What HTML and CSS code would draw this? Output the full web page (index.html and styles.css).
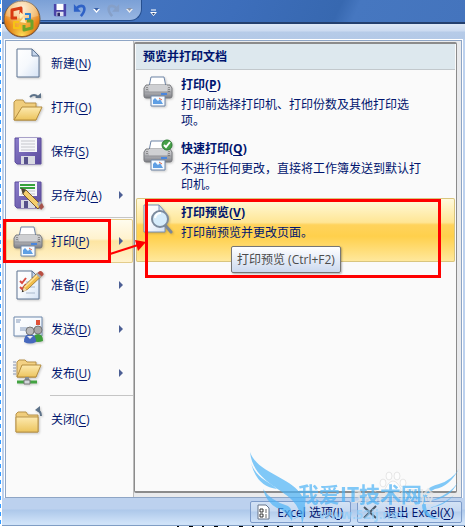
FILE: index.html
```html
<!DOCTYPE html>
<html lang="zh-CN">
<head>
  <meta charset="UTF-8">
  <meta name="viewport" content="width=device-width, initial-scale=1.0">
  <title>Excel - 打印预览</title>
  <link rel="stylesheet" href="styles.css">
</head>
<body>
<!-- Shared icon parts -->
<svg class="defs" aria-hidden="true">
  <defs>
    <linearGradient id="paper" x1="0" y1="0" x2="1" y2="1">
      <stop offset="0" stop-color="#fff"/><stop offset=".5" stop-color="#f6f9fd"/><stop offset="1" stop-color="#d5e2f4"/>
    </linearGradient>
    <linearGradient id="folder" x1="0" y1="0" x2="0" y2="1">
      <stop offset="0" stop-color="#fdeab0"/><stop offset="1" stop-color="#ecc45d"/>
    </linearGradient>
    <linearGradient id="metal" x1="0" y1="0" x2="0" y2="1">
      <stop offset="0" stop-color="#d6d6d8"/><stop offset=".5" stop-color="#b4b5b9"/><stop offset="1" stop-color="#7c7d83"/>
    </linearGradient>
    <linearGradient id="disk" x1="0" y1="0" x2="1" y2="1">
      <stop offset="0" stop-color="#8c7ecb"/><stop offset="1" stop-color="#5a4a9c"/>
    </linearGradient>
    <radialGradient id="orb" cx=".5" cy=".2" r=".85">
      <stop offset="0" stop-color="#fdebd0"/><stop offset=".4" stop-color="#f3b865"/><stop offset=".65" stop-color="#e8861a"/><stop offset="1" stop-color="#b4500a"/>
    </radialGradient>
    <radialGradient id="orbGlow" cx=".5" cy="1" r=".6">
      <stop offset="0" stop-color="#ffe45c"/><stop offset="1" stop-color="#ffb020" stop-opacity="0"/>
    </radialGradient>
    <symbol id="printer" viewBox="0 0 32 32">
      <path d="M9 2h13l2 10H7z" fill="#fff" stroke="#6f86a8"/>
      <path d="M4 10h24l2 3v8q0 2-2 2H4q-2 0-2-2v-8z" fill="url(#metal)" stroke="#77787d"/>
      <path d="M7 10h18v7H7z" fill="#cfd0d3"/>
      <path d="M2 17h28" stroke="#8f9095"/>
      <path d="M19 19h6" stroke="#4a86dd" stroke-width="2"/>
      <path d="M27 12v6M5 12v4" stroke="#555" stroke-dasharray="1 1"/>
      <path d="M9 21h14v10H9z" fill="#f5faff" stroke="#6f86a8"/>
      <path d="M11 29v-4l2-2 3 3 2-2 3 5z" fill="#5f9fe4"/>
      <path d="M17 23l3 2" stroke="#e46a4a"/>
    </symbol>
    <symbol id="floppy" viewBox="0 0 32 32">
      <path d="M3 3h26v26H5l-2-2z" fill="url(#disk)" stroke="#5e4f9f"/>
      <path d="M7 3h18v14H7z" fill="#f6f6fa"/>
      <path d="M9 6h14M9 9h14M9 12h14M9 15h14" stroke="#c5c6cc"/>
      <path d="M9 21h14v8H9z" fill="#d9dae2"/>
      <path d="M12 22h4v7h-4z" fill="#56518a"/>
    </symbol>
    <symbol id="pencil" viewBox="0 0 32 32">
      <path d="M2 30l2-7L23 4l5 5L9 27z" fill="#f1bd4b" stroke="#8c6424"/>
      <path d="M5 24L24 6" stroke="#ffe49a" stroke-width="2"/>
      <path d="M2 30l2-6 4 4z" fill="#f3d9b0"/><path d="M1 31l1-4 2 3z" fill="#333"/>
      <path d="M21 6l3-3 5 5-3 3z" fill="#a5aab3"/>
      <path d="M24 3q3-3 6 0t0 5l-1 1-6-5z" fill="#ba4f42"/>
    </symbol>
    <symbol id="sheet" viewBox="0 0 32 32">
      <path d="M5 2h15l7 7v21H5z" fill="url(#paper)" stroke="#5f7593"/>
      <path d="M20 2v7h7z" fill="#c6d6ec" stroke="#5f7593"/>
    </symbol>
  </defs>
</svg>

<div class="window">
  <header class="titlebar">
    <div class="quick">
      <button aria-label="保存"><svg width="14" height="14" viewBox="0 0 16 16"><path d="M1 1h14v14H2l-1-1z" fill="#4a44a8"/><path d="M4 1h8v7H4z" fill="#fff"/><path d="M4 10h8v5H4z" fill="#dfe2f2"/><path d="M5 11h3v4H5z" fill="#2c2a66"/></svg></button>
      <button aria-label="撤消"><svg width="14" height="14" viewBox="0 0 16 16"><path d="M4 6q4-4 8-2 3 4-3 11" fill="none" stroke="#2f62c6" stroke-width="3"/><path d="M1 1v9h8z" fill="#2f62c6"/></svg></button>
      <svg width="7" height="5" viewBox="0 0 7 5"><path d="M0 1h7L3.500 5z" fill="#fff"/><path d="M1 0h5L3.500 3z" fill="#3860a8"/></svg>
      <button aria-label="恢复"><svg width="14" height="14" viewBox="0 0 16 16"><path d="M12 6q-4-4-8-2-3 4 3 11" fill="none" stroke="#86a0c8" stroke-width="3"/><path d="M15 1v9H7z" fill="#86a0c8"/></svg></button>
      <svg width="7" height="5" viewBox="0 0 7 5"><path d="M0 1h7L3.500 5z" fill="#eee"/><path d="M1 0h5L3.500 3z" fill="#8a94a8"/></svg>
    </div>
    <button class="customize" aria-label="自定义快速访问工具栏"><svg width="7" height="8" viewBox="0 0 7 8"><path d="M1 1h5" stroke="#fff"/><path d="M0 3h7L3.500 7z" fill="#fff"/><path d="M2 4h3L3.500 6z" fill="#24406e"/></svg></button>
    <button class="orb" aria-label="Office 按钮">
      <svg width="38" height="38" viewBox="0 0 38 38">
        <circle cx="19" cy="19" r="18" fill="url(#orb)" stroke="#735c45"/>
        <circle cx="19" cy="19" r="17" fill="url(#orbGlow)"/>
        <path d="M3 16a16 16 0 0 1 32 0q-16 5-32 0z" fill="#fff" opacity=".25"/>
        <g fill="none" stroke-width="3" stroke-linejoin="round">
          <path d="M14 18H9V10l9-2v6" stroke="#d83b12"/>
          <path d="M22 14h5v5h-5" stroke="#2e86d8" stroke-width="2"/>
          <path d="M16 22h-5v6h6v-3" stroke="#f6c315" stroke-width="2"/>
          <path d="M21 25v5l8-2v-7h-5" stroke="#6da32a"/>
        </g>
        <path d="M17 12l4 3-4 4zM21 17l-4 5 6 1z" fill="#fff0b8"/>
      </svg>
    </button>
  </header>

  <main class="menu">
    <div class="panes">
      <ul class="commands">
        <li><button><svg class="icon"><use href="#sheet"/></svg>新建(<u>N</u>)</button></li>
        <li><button><svg class="icon" viewBox="0 0 32 32"><path d="M2 29V11l2-2h7l2 3h11v17z" fill="#f0cd7c" stroke="#b8934a"/><path d="M2 29l8-13h20l-6 13z" fill="url(#folder)" stroke="#b48c3c"/><path d="M18 6q4-4 8 0" fill="none" stroke="#5d7289" stroke-width="2"/><path d="M23 7h6V2z" fill="#5d7289"/></svg>打开(<u>O</u>)</button></li>
        <li><button><svg class="icon"><use href="#floppy"/></svg>保存(<u>S</u>)</button></li>
        <li><button class="more"><svg class="icon" viewBox="0 0 32 32"><use href="#floppy" width="32" height="32"/><path d="M8 6h15M8 9h15" stroke="#35a23c" stroke-width="2"/><path d="M10 10l4 1 15 15-3 4L11 15z" fill="#f4cd6c" stroke="#7b5a2c"/><path d="M9 9l5 2-3 4z" fill="#4b4536"/><path d="M25 25l3-3 2 2-3 4z" fill="#a5aab3"/><path d="M27 27l3-3 2 4-3 3z" fill="#a6524a"/></svg>另存为(<u>A</u>)</button></li>
        <li class="split"><button class="more active"><svg class="icon"><use href="#printer"/></svg>打印(<u>P</u>)</button><span class="mark mark-print"></span></li>
        <li><button class="more"><svg class="icon" viewBox="0 0 32 32"><use href="#sheet" width="32" height="32"/><path d="M8 12l2 2 4-5M8 18l2 2 4-5" fill="none" stroke="#d94a3f" stroke-width="2"/><path d="M14 13h9M14 18h9M14 24h9" stroke="#a9b8cc"/><use href="#pencil" x="9" y="1" width="23" height="23"/></svg>准备(<u>E</u>)</button></li>
        <li><button class="more"><svg class="icon" viewBox="0 0 32 32"><path d="M2 4h28v19H2z" fill="url(#paper)" stroke="#6f89ad"/><path d="M24 7h4v5h-4z" fill="#df5037"/><path d="M4 7h5M4 9h4M8 15h9M8 17h7" stroke="#8399bb"/><path d="M21 28q0-7 5-7t5 7q-5 2-10 0z" fill="#3f9e3c"/><circle cx="26" cy="17" r="4" fill="#a8a8a8" stroke="#777"/><path d="M12 29q0-8 6-8t6 8q-6 3-12 0z" fill="#4668bd"/><circle cx="18" cy="18" r="4" fill="#b9b9bb" stroke="#777"/><path d="M15 23l3 3 3-3" fill="#eee"/></svg>发送(<u>D</u>)</button></li>
        <li><button class="more"><svg class="icon" viewBox="0 0 32 32"><path d="M1 5h3M1 8h3M1 11h3M1 14h3M1 17h3" stroke="#8795b1"/><path d="M5 20V5l2-2h6l2 2h9v15z" fill="#f3d184" stroke="#b8934a"/><path d="M5 20l5-12h19l-5 12z" fill="url(#folder)" stroke="#b48c3c"/><path d="M15 20v5" stroke="#858b93" stroke-width="4"/><path d="M5 25h20" stroke="#42a341" stroke-width="3"/><path d="M12 23h6v4h-6z" fill="#d3d7dc" stroke="#777"/></svg>发布(<u>U</u>)</button></li>
        <li class="split"><button><svg class="icon" viewBox="0 0 32 32"><path d="M4 29V11l2-2h8l2 3h10v17z" fill="#f0cd7c" stroke="#b8934a"/><path d="M4 14h22v15H4z" fill="url(#folder)" stroke="#b9944a"/><path d="M25 7q4 1 4 6" fill="none" stroke="#5d7289" stroke-width="2"/><path d="M23 7l5-4v7z" fill="#5d7289"/></svg>关闭(<u>C</u>)</button></li>
      </ul>

      <section class="submenu">
        <h2>预览并打印文档</h2>
        <ul>
          <li><button>
            <svg class="icon"><use href="#printer"/></svg>
            <span class="info"><b>打印(<u>P</u>)</b><span>打印前选择打印机、打印份数及其他打印选项。</span></span>
          </button></li>
          <li><button>
            <svg class="icon" viewBox="0 0 32 32"><use href="#printer" width="32" height="32"/><circle cx="25" cy="6" r="5" fill="#45a048" stroke="#2c7d32"/><path d="M22 6l2 2 4-5" fill="none" stroke="#fff" stroke-width="2"/></svg>
            <span class="info"><b>快速打印(<u>Q</u>)</b><span>不进行任何更改，直接将工作簿发送到默认打印机。</span></span>
          </button></li>
          <li><button class="hover">
            <svg class="icon" viewBox="0 0 32 32"><path d="M2 2h15l6 7v20H2z" fill="url(#paper)" stroke="#7890b4"/><path d="M17 2v7h6z" fill="#d5e2f2" stroke="#7890b4"/><path d="M23 22l6 7" stroke="#7b8798" stroke-width="3" stroke-linecap="round"/><circle cx="18" cy="16" r="8" fill="#d6ecfb" stroke="#7c8b9e" stroke-width="2"/><path d="M13 15q1-5 6-5" fill="none" stroke="#fff" stroke-width="2"/></svg>
            <span class="info"><b>打印预览(<u>V</u>)</b><span>打印前预览并更改页面。</span></span>
          </button>
          <span class="mark mark-preview"></span>
          <svg class="arrow" width="40" height="24" viewBox="0 0 40 24"><path d="M2 18L30 9" stroke="#f00" stroke-width="2"/><path d="M38 6L27 4l3 11z" fill="#f00"/></svg>
          <span class="tooltip" role="tooltip">打印预览 (Ctrl+F2)</span>
          </li>
        </ul>
      </section>
    </div>

    <footer class="actions">
      <button><svg width="16" height="16" viewBox="0 0 16 16"><path d="M3 1h8l3 3v11H3z" fill="#fff" stroke="#66748a"/><path d="M5 5h3v3H5zM5 10h3v3H5z" fill="none" stroke="#333"/><path d="M10 6h2M10 8h2M10 11h2M10 13h2" stroke="#666"/></svg>Excel 选项(<u>I</u>)</button>
      <button><svg width="16" height="16" viewBox="0 0 16 16"><path d="M2 3l12 11M14 2L2 14" stroke="#4c5968" stroke-width="2"/></svg>退出 Excel(<u>X</u>)</button>
    </footer>
  </main>
  <div class="cells"></div>

  <div class="watermark">
    <svg class="wings" width="216" height="74" viewBox="0 0 216 74">
      <g fill="#4db4f7">
        <path d="M1 1C9 23 43 26 53 45Q59 57 53 73Q52 58 43 49C28 35 4 28 1 1z"/>
        <path d="M2 12C8 28 18 29 28 38Q8 36 2 12z"/>
        <path d="M14 38Q22 50 39 55Q45 59 43 70Q36 59 28 57Q17 51 14 38z"/>
        <path d="M38 70Q53 68 55 51Q61 65 38 70z"/>
        <path d="M210 18Q200 36 186 38Q173 43 178 60Q182 66 190 68Q174 69 173 54Q170 38 190 33Q203 29 210 18z"/>
        <path d="M209 31Q201 48 180 50Q201 44 209 31z"/>
        <path d="M205 44Q196 55 180 57Q195 53 205 44z"/>
      </g>
    </svg>
    <svg class="paw" width="28" height="24" viewBox="0 0 28 24" fill="#fff" stroke="#ddd"><ellipse cx="4" cy="12" rx="3" ry="4"/><ellipse cx="10" cy="5" rx="3" ry="4"/><ellipse cx="18" cy="5" rx="3" ry="4"/><ellipse cx="24" cy="12" rx="3" ry="4"/><path d="M14 10q4 0 8 8 0 5-8 4-8 1-8-4 4-8 8-8z"/></svg>
    <span class="baidu">Baidu经验</span>
    <span class="brand">我爱IT技术网</span>
    <span class="url">www.52ij.net</span>
  </div>
</div>
</body>
</html>
```

FILE: styles.css
```css
* { box-sizing: border-box; }

body {
  margin: 0;
  background: #fff;
  color: #00156e;
  font-family: "Open Sans", "Noto Sans CJK SC", sans-serif;
  font-size: 12px;
}

.defs { position: absolute; width: 0; height: 0; }

ul { list-style: none; margin: 0; padding: 0; }

button {
  margin: 0;
  padding: 0;
  border: none;
  background: none;
  color: inherit;
  font: inherit;
  text-align: left;
}

u { text-underline-offset: 2px; }

.window {
  position: relative;
  min-height: 100vh;
  display: flex;
  flex-direction: column;
  padding-left: 2px;
  background: repeating-linear-gradient(#3399ff 0 4px, #fff 4px 8px) left / 1px 100% no-repeat;
}

/* Title bar */
.titlebar {
  position: relative;
  height: 24px;
  display: flex;
  align-items: flex-start;
  padding-left: 20px;
  background: linear-gradient(115deg, #4a7ac4 0%, #3d6ebb 50%, #3768b0 72%, #4677c0 76%, #4474bd 100%);
  border-bottom: 2px solid #24406e;
}

.quick {
  height: 21px;
  display: flex;
  align-items: center;
  gap: 6px;
  padding: 0 8px 0 30px;
  border: 1px solid #264f8f;
  border-top: none;
  border-radius: 0 0 12px 0;
  background: linear-gradient(#7ba0d6, #98b6e2);
}
.quick button, .quick svg { display: block; }

.customize { padding: 4px 0 0 8px; }

.orb {
  position: absolute;
  left: 1px;
  top: 0;
}
.orb svg { display: block; }

/* Office menu */
.menu {
  flex: 1;
  display: flex;
  flex-direction: column;
  padding-top: 16px;
  background: linear-gradient(#dde8f6, #cbdaf0 7px, #b6cbe8 8px, #b3c9e7 15px, #bcd1ee 16px);
  border-bottom: 1px solid #7f9dc4;
}

.panes {
  flex: 1;
  display: flex;
  margin: 0 3px;
  border: 1px solid #8ea5c5;
  background: #e9eaec;
  box-shadow: 0 0 0 1px #fff;
}

.commands {
  width: 128px;
  flex: none;
  background: #fafafa;
  border-right: 1px solid #bbb;
}
.commands li { position: relative; }
.commands .split { padding-top: 2px; }
.commands .split::before {
  content: "";
  position: absolute;
  top: 0;
  left: 44px;
  right: 0;
  height: 1px;
  background: #c5c5c5;
}
.commands button {
  width: 100%;
  height: 44px;
  display: flex;
  align-items: center;
  padding: 0 6px;
}
.commands .icon { margin-right: 7px; }
.commands .more::after {
  content: "";
  margin-left: auto;
  margin-right: 4px;
  border: 4px solid transparent;
  border-left-color: #4c5f94;
  border-right: none;
}
.commands .active {
  border-radius: 2px;
  background: linear-gradient(#fffdf0, #fff2ce 45%, #fde5a2 50%, #fff3cf);
  box-shadow: inset 0 0 0 1px #e3cc8b;
}

.icon {
  width: 32px;
  height: 32px;
  flex: none;
  filter: drop-shadow(1px 1px 1px rgba(0,0,0,0.2));
}

/* Right pane */
.submenu {
  flex: 1;
  margin: 1px 4px 4px 0;
  border: 2px solid #8b8b8b;
  border-left-width: 1px;
  border-right-width: 1px;
  border-radius: 2px;
  background: #fafafa;
  padding: 0 1px;
}
.submenu h2 {
  margin: 0;
  padding: 0 7px;
  height: 26px;
  line-height: 25px;
  font-size: 12px;
  background: #dde8ee;
  border-bottom: 1px solid #c2c8cc;
}
.submenu li { position: relative; }
.submenu button {
  width: 100%;
  height: 64px;
  display: flex;
  align-items: flex-start;
  gap: 7px;
  padding: 5px 30px 0 6px;
}
.submenu .hover {
  border-radius: 2px;
  background: linear-gradient(#fffbe0, #ffe695 38%, #ffd35c 42%, #ffd04c 60%, #ffe99f);
  box-shadow: inset 0 0 0 1px #d9c57e;
}

.info b { display: block; line-height: 20px; }
.info span { display: block; padding-top: 2px; line-height: 16px; }

.mark {
  position: absolute;
  border: 3px solid #f00;
  pointer-events: none;
}
.mark-print { left: -3px; right: 22px; top: 2px; bottom: 0; }
.mark-preview { left: 9px; right: 14px; top: 1px; height: 79px; }

.arrow {
  position: absolute;
  left: -28px;
  top: 38px;
}

.tooltip {
  position: absolute;
  left: 95px;
  top: 48px;
  padding: 0 5px;
  line-height: 25px;
  white-space: nowrap;
  color: #4c4c4c;
  border: 1px solid #767676;
  border-radius: 2px;
  background: linear-gradient(#fff, #ccd9ef);
  box-shadow: 1px 1px 2px rgba(0,0,0,0.3);
}

/* Bottom buttons */
.actions {
  display: flex;
  justify-content: flex-end;
  gap: 6px;
  padding: 3px 3px 2px;
  background: linear-gradient(#bcd1ee 0 11px, #adc8ea 12px, #cfe2f8 25px);
}
.actions button {
  display: flex;
  align-items: center;
  height: 22px;
  padding: 0 7px 0 4px;
  white-space: pre;
  border: 1px solid #7d9bc9;
  border-radius: 2px;
  background: linear-gradient(#d3e2f5, #c6d9f1 45%, #b4cdec 50%, #cfe1f7);
}
.actions svg { margin-right: 6px; }

/* Worksheet edge under the menu */
.cells {
  height: 1px;
  background: linear-gradient(90deg, #fff 175px, transparent 175px),
    repeating-linear-gradient(90deg, #000 0 2px, #fff 2px 12px, #000 12px 16px, #fff 16px 25px);
}

.watermark {
  position: absolute;
  right: 0;
  bottom: 0;
  width: 216px;
  height: 76px;
  opacity: 0.7;
  pointer-events: none;
}
.watermark > * { position: absolute; white-space: nowrap; }
.wings { left: 0; top: 0; }
.paw { left: 130px; top: 20px; }
.baidu {
  left: 102px;
  top: 36px;
  line-height: 20px;
  font-size: 17px;
  font-weight: bold;
  color: #e4e4e4;
}
.brand {
  left: 49px;
  top: 30px;
  line-height: 26px;
  font-size: 21px;
  font-weight: bold;
  color: #4db4f7;
}
.url {
  left: 70px;
  top: 55px;
  line-height: 16px;
  font-size: 13px;
  font-weight: bold;
  color: #8fcffa;
}
```
